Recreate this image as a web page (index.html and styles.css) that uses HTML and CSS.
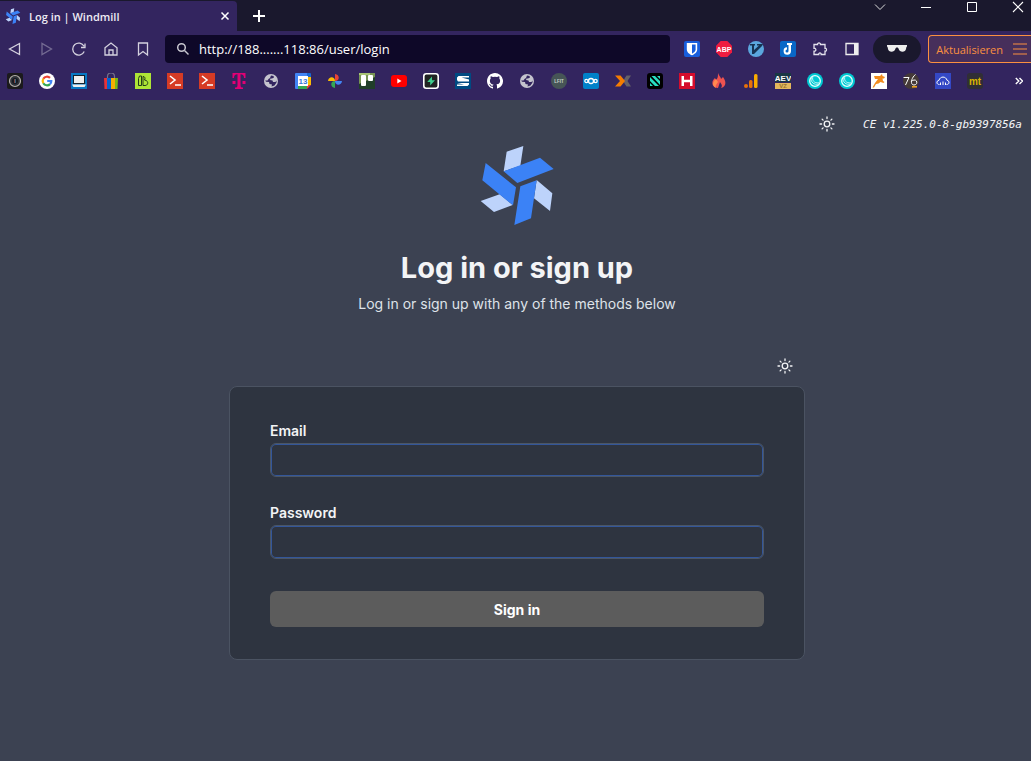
FILE: index.html
```html
<!DOCTYPE html>
<html lang="en">
<head>
<meta charset="utf-8">
<meta name="viewport" content="width=device-width, initial-scale=1">
<title>Log in | Windmill</title>
<link rel="stylesheet" href="styles.css">
</head>
<body>
<svg class="defs" aria-hidden="true">
  <symbol id="windmill" viewBox="60 30 220 240">
    <path fill="#bdd3fb" d="M139 50 189 33 180 92 130 109ZM229 135 276 175 269 228 221 190ZM61 198 118 178 157 210 101 231Z"/>
    <path fill="#3b82f6" d="M130 109 239 68 280 102 171 144ZM76 84 167 157 158 211 66 136ZM180 154 229 136 212 250 162 270Z"/>
  </symbol>
  <symbol id="sun" viewBox="0 0 16 16">
    <g fill="none" stroke="currentColor" stroke-width="1.3" stroke-linecap="round"><circle cx="8" cy="8" r="2.8"/><path d="M8 1v1.6M8 13.4V15M1 8h1.6M13.4 8H15M3.1 3.1l1 1M11.9 11.9l1 1M3.1 12.9l1-1M11.9 4.1l1-1"/></g>
  </symbol>
  <symbol id="globe" viewBox="0 0 16 16">
    <circle cx="8" cy="8" r="7" fill="#c5c4ce"/><path fill="#33255f" d="M8 2.600 10.500 3 11 4.500 9 5.500 7.500 5.500 7 7 9.500 7.500 10 9 12.500 9 13.500 7.500 13.500 9.500 11.500 12.500 8.500 13.600 9 11.500 6.500 11 6 9 3 8.800 2.200 7.500 4.500 7.500 5.500 6 7 5Z"/>
  </symbol>
  <symbol id="prompt" viewBox="0 0 16 16">
    <path fill="#d63b25" d="M0 0h16v16H0z"/><path d="m3 3 5 4-5 4M8 12h6" fill="none" stroke="#fff" stroke-width="1.6"/>
  </symbol>
  <symbol id="ring" viewBox="0 0 16 16">
    <circle cx="8" cy="8" r="8" fill="#00c9d2"/><g fill="none" stroke="#e5ffff"><circle cx="8" cy="8" r="5.3" stroke-width="1.3"/><path d="M6 3.5C4.5 7 7 10.5 12 9.8M4.2 5C3.5 9 7 12.3 11.5 11" stroke-width=".8"/></g>
  </symbol>
</svg>

<header class="browser">
  <div class="titlebar">
    <div class="tab">
      <svg class="icon"><use href="#windmill"/></svg>
      <span class="tab-title">Log in | Windmill</span>
      <button class="tab-close" aria-label="Close tab"><svg viewBox="0 0 10 10" width="10" height="10"><path d="m1.5 1.5 7 7m0-7-7 7" stroke="#fff" stroke-width="1.5"/></svg></button>
    </div>
    <button class="new-tab" aria-label="New tab"><svg viewBox="0 0 12 12" width="12" height="12"><path d="M6 0v12M0 6h12" stroke="#fff" stroke-width="2"/></svg></button>
    <div class="window-controls">
      <button aria-label="Tab list"><svg viewBox="0 0 12 12"><path d="m1 3.5 5 5 5-5" fill="none" stroke="#ddd"/></svg></button>
      <button aria-label="Minimize"><svg viewBox="0 0 12 12"><path d="M1 6.500h10" stroke="#fff"/></svg></button>
      <button aria-label="Maximize"><svg viewBox="0 0 12 12"><path d="M1.5 1.5h9v9h-9z" fill="none" stroke="#fff"/></svg></button>
      <button aria-label="Close window"><svg viewBox="0 0 12 12"><path d="m1 1 10 10M11 1 1 11" stroke="#fff" stroke-width="1.1"/></svg></button>
    </div>
  </div>

  <div class="toolbar">
    <nav class="nav-buttons" aria-label="Navigation">
      <button aria-label="Back"><svg viewBox="0 0 16 16"><path d="M12.500 2.500v11L2.500 8Z"/></svg></button>
      <button class="dim" aria-label="Forward"><svg viewBox="0 0 16 16"><path d="M3 2.5v11L12.500 8Z"/></svg></button>
      <button aria-label="Reload"><svg viewBox="0 0 16 16"><path d="M13.2 10.5A6 6 0 1 1 13 5.2M14 2.5v4h-4"/></svg></button>
      <button aria-label="Home"><svg viewBox="0 0 16 16"><path d="M2 6.8 8 2l6 4.8v7.2H2ZM6 14V9h4v5"/></svg></button>
      <button aria-label="Bookmark"><svg viewBox="0 0 16 16"><path d="M3.5 2h9v12L8 10.5 3.5 14Z"/></svg></button>
    </nav>
    <label class="address">
      <svg class="icon" viewBox="0 0 16 16"><g fill="none" stroke="#c8c7d0" stroke-width="1.5"><circle cx="6.5" cy="6.5" r="3.8"/><path d="m9.5 9.5 4 4"/></g></svg>
      <input class="address-input" type="text" aria-label="Address" value="http://188.......118:86/user/login">
    </label>
    <div class="extensions">
      <svg class="icon" viewBox="0 0 16 16"><rect width="16" height="16" rx="2" fill="#175ddc"/><path fill="#fff" d="M2.8 2h10.4v6.5c0 3-3.2 4.8-5.2 5.8-2-1-5.2-2.800-5.200-5.800Z"/><path fill="#175ddc" d="M8 3.500h3.600V8.500c0 1.800-1.800 3.200-3.600 4.200Z"/></svg>
      <svg class="icon" viewBox="0 0 16 16"><path fill="#ee1c40" d="M4.700 0h6.600L16 4.700v6.600L11.300 16H4.700L0 11.300V4.700Z"/><text x="8" y="10.700" class="glyph" font-size="7" fill="#fff">ABP</text></svg>
      <svg class="icon" viewBox="0 0 16 16"><circle cx="8" cy="8" r="8" fill="#5ba7de"/><path fill="#173454" d="M2 3h5v1.500H6V9l5-4.500H9V3h6l-1 2-8 8H4V4.500H2Z"/></svg>
      <svg class="icon" viewBox="0 0 16 16"><rect width="16" height="16" rx="2" fill="#0967c7"/><path fill="#fff" d="M7 2h5v2h-1v6a3.700 3.700 0 1 1-4-3.700v2.200a1.500 1.500 0 1 0 1.500 1.500V4H7Z"/></svg>
      <svg class="icon" viewBox="0 0 16 16"><path d="M2 3.500h3.500c-.5-2 3.500-2 3 0H13v3.800c2-.6 2 3.400 0 2.900v3.300H9.200c.5-2-3-2-2.500 0H2v-3.300c2.500.5 2.500-3.400 0-2.900Z" fill="none" stroke="#e3e1ec" stroke-width="1.300"/></svg>
      <svg class="icon" viewBox="0 0 16 16"><path d="M2 2.500h12v11H2Z" fill="none" stroke="#eee" stroke-width="1.300"/><path d="M10 2.500h4v11h-4Z" fill="#eee"/></svg>
    </div>
    <button class="private" aria-label="Private window"><svg viewBox="0 0 20 8" width="20" height="8"><path fill="#eee" d="M0 0h20v1.500c-.5 0-.7.800-.9 2C18.600 7.700 12.500 7.800 11.500 3.500 11.200 2 8.800 2 8.500 3.500 7.500 7.800 1.400 7.700.9 3.500.7 2.300.5 1.500 0 1.500Z"/></svg></button>
    <button class="update">Aktualisieren <svg viewBox="0 0 14 12" width="14" height="12"><path d="M0 1h14M0 6h14M0 11h14" stroke="#fb9040" stroke-width="1.200"/></svg></button>
  </div>

  <nav class="bookmarks" aria-label="Bookmarks">
    <svg class="icon" viewBox="0 0 16 16"><rect width="16" height="16" rx="2" fill="#1b1a1c"/><circle cx="8" cy="8" r="5.500" fill="#30343a" stroke="#b5b0ab" stroke-width="1.200"/><circle cx="8" cy="8" r="3" fill="#16191f"/><path d="M7.500 6v4" stroke="#7a443e"/><path d="M8.500 6v4" stroke="#37627f"/></svg>
    <svg class="icon" viewBox="0 0 16 16"><circle cx="8" cy="8" r="8" fill="#fff"/><g fill="none" stroke-width="2.200"><path stroke="#ea4335" d="M4.300 5.800A4.300 4.300 0 0 1 11 4.900"/><path stroke="#fbbc05" d="M4.300 5.800a4.300 4.300 0 0 0 0 4.400"/><path stroke="#34a853" d="M4.300 10.200A4.300 4.300 0 0 0 11 11.100"/><path stroke="#4285f4" d="M11 11.100A4.300 4.300 0 0 0 12.300 8H8.200"/></g></svg>
    <svg class="icon" viewBox="0 0 16 16"><path fill="#0878c4" d="M0 0h16v16H0z"/><path fill="#14222c" d="M2 2h12v9H2z"/><path fill="#eee" d="M3 3h10v7H3zM1 11.500h14L13.500 14h-11z"/></svg>
    <svg class="icon" viewBox="0 0 16 16"><path d="M4.500 6V3.500a3.500 3.500 0 0 1 7 0V6" fill="none" stroke="#75718a" stroke-width="1.200"/><path fill="#e53238" d="M1 5h4v11H1.500z"/><path fill="#0064d2" d="M4 5h4v11H4z"/><path fill="#f5af02" d="M8 5h4v11H8z"/><path fill="#78b817" d="M12 5h3l-.5 11H12z"/></svg>
    <svg class="icon" viewBox="0 0 16 16"><path fill="#aee536" d="M0 0h16v16H0z"/><g fill="none" stroke="#243c19"><path d="M6.500 12.500h-3V5.500l1-2.500h2Z"/><path d="M8 12.500V3.500c2 0 2.500 2 1.500 3.500C14 7.500 13.500 12.500 10 12.500Z"/></g></svg>
    <svg class="icon"><use href="#prompt"/></svg>
    <svg class="icon"><use href="#prompt"/></svg>
    <svg class="icon" viewBox="0 0 16 16"><path fill="#e20074" d="M1.500 0h13v5H13C13 2.500 12 1.500 9.500 1.300V12c0 2 .500 2.500 2.500 2.600V16H4v-1.400C6 14.500 6.500 14 6.500 12V1.300C4 1.500 3 2.500 3 5H1.500ZM1.500 8h3v3h-3zM11.500 8h3v3h-3z"/></svg>
    <svg class="icon"><use href="#globe"/></svg>
    <svg class="icon" viewBox="0 0 16 16"><path fill="#4285f4" d="M0 1a1 1 0 0 1 1-1h11v4H4v12H1a1 1 0 0 1-1-1Z"/><path fill="#1967d2" d="M12 0h3a1 1 0 0 1 1 1v3h-4z"/><path fill="#fbbc04" d="M12 4h4v8h-4z"/><path fill="#34a853" d="M3 12h9v4H3z"/><path fill="#ea4335" d="M12 12h4l-4 4z"/><path fill="#fff" d="M3 3h10v10H3z"/><text x="8" y="11" class="glyph" font-size="8" fill="#3475d9">13</text></svg>
    <svg class="icon" viewBox="0 0 16 16"><path fill="#ea4335" d="M8 1c5 .5 5 7 0 7Z"/><path fill="#4285f4" d="M15 8c-.5 5-7 5-7 0Z"/><path fill="#34a853" d="M8 15c-5-.5-5-7 0-7Z"/><path fill="#fbbc04" d="M1 8c.5-5 7-5 7 0Z"/></svg>
    <svg class="icon" viewBox="0 0 16 16"><path fill="#203e2a" d="M0 0h16v16H0z"/><path fill="#789455" d="M0 0h16v4L0 11z"/><path fill="#a8c475" d="M0 0h11v2H0z"/><rect x="2" y="2" width="5" height="11" rx="1" fill="#fff"/><rect x="9" y="2" width="5" height="6" rx="1" fill="#fff"/></svg>
    <svg class="icon" viewBox="0 0 16 16"><rect y="2" width="16" height="12" rx="3" fill="#f00"/><path fill="#fff" d="m6.300 5.500 4.200 2.500-4.200 2.500Z"/></svg>
    <svg class="icon" viewBox="0 0 16 16"><rect x=".8" y=".8" width="14.400" height="14.400" rx="2.500" fill="#202322" stroke="#fff" stroke-width="1.600"/><path fill="#3ecf8e" d="M9 3.500v3.700h3L7.200 12.500V9h-3Z"/></svg>
    <svg class="icon" viewBox="0 0 16 16"><path fill="#004a82" d="M0 0h16v16H0z"/><path fill="#fff" d="M3.500 3H14v1.500H6.500L14 6.500v2H3L2 7V4.500ZM2 10h12v1.500L12.500 13H2v-1.500h7Z"/></svg>
    <svg class="icon" viewBox="0 0 16 16"><path fill="#fff" d="M8 0C3.600 0 0 3.600 0 8c0 3.500 2.300 6.500 5.500 7.600.4.100.5-.2.500-.4v-1.500c-2.200.5-2.700-.9-2.700-.9-.400-.9-.9-1.200-.9-1.200-.7-.5.1-.5.100-.5.8.1 1.200.8 1.200.8.7 1.200 1.900.9 2.300.7.100-.5.300-.9.500-1.100-1.800-.2-3.600-.9-3.600-4 0-.9.300-1.600.8-2.100-.1-.2-.4-1 .1-2.100 0 0 .7-.2 2.200.8a7.600 7.600 0 0 1 4 0c1.500-1 2.200-.8 2.200-.8.400 1.100.2 1.900.1 2.100.5.600.8 1.300.8 2.100 0 3.100-1.900 3.700-3.700 3.900.3.300.6.800.6 1.500v2.300c0 .2.100.5.500.4A8 8 0 0 0 8 0Z"/></svg>
    <svg class="icon"><use href="#globe"/></svg>
    <svg class="icon" viewBox="0 0 16 16"><circle cx="8" cy="8" r="8" fill="#465556"/><text x="8" y="9.500" class="glyph" font-size="4.500" fill="#c9d2cb">LFIT</text></svg>
    <svg class="icon" viewBox="0 0 16 16"><rect width="16" height="16" rx="2" fill="#0082c9"/><g fill="none" stroke="#fff" stroke-width="1.300"><circle cx="8" cy="8" r="2.500"/><circle cx="3.400" cy="8" r="1.600"/><circle cx="12.600" cy="8" r="1.600"/></g></svg>
    <svg class="icon" viewBox="0 0 16 16"><path fill="#666067" d="M11.500 2.500H16L12.500 8l3.500 5.500h-4.500L8 8Z"/><path fill="#f57c00" d="M0 2.500h5.500L10 8l-4.500 5.500H0L5 8Z"/></svg>
    <svg class="icon" viewBox="0 0 16 16"><rect width="16" height="16" rx="3" fill="#000"/><path fill="#27dfc2" d="M3 4 12 13H8L3 8ZM4.500 3H8l5 5v4ZM3 10l3 3H3ZM10 3h3v3Z"/></svg>
    <svg class="icon" viewBox="0 0 16 16"><path fill="#d50c2d" d="M0 0h16v16H0z"/><path fill="#fff" d="M2.500 3H5v3.800h6V3h2.500v10H11V9.200H5V13H2.500z"/></svg>
    <svg class="icon" viewBox="0 0 16 16"><path fill="#ef5350" d="M7 0c1 3 3 4 3 6l2-2c3 4 4 9-2 11 2-3 0-4-1-6l-2 6C-1 14 1 7 4 5l1 2c2-2 2-4 2-7Z"/><path fill="#ff8a50" d="M5 6c-4 3-4 7 0 9-1-3 1-4 2-6Z"/></svg>
    <svg class="icon" viewBox="0 0 16 16"><circle cx="3" cy="13" r="2" fill="#e8710a"/><rect x="6" y="7" width="3.500" height="8" rx="1.500" fill="#e8710a"/><rect x="11" y="1" width="3.500" height="14" rx="1.500" fill="#f9ab00"/></svg>
    <svg class="icon" viewBox="0 0 16 16"><path fill="#193844" d="M0 0h16v9H0z"/><path fill="#e4b75c" d="M0 10h16v6H0z"/><text x="8" y="7.500" class="glyph" font-size="8" fill="#fff">AEV</text><text x="8" y="15.200" class="glyph" font-size="6" fill="#9a7431">VZ</text></svg>
    <svg class="icon"><use href="#ring"/></svg>
    <svg class="icon"><use href="#ring"/></svg>
    <svg class="icon" viewBox="0 0 16 16"><path fill="#fff" d="M0 0h16v16H0z"/><path fill="#f28b1d" d="M3 3h6l2-2 .5 2L14 4l-1 1.500h-1.500L12 8l1.500 1-1 1-3-1-2 1.500L5 11l-2 3.500H1.500L4 10l3-4H4Z"/></svg>
    <svg class="icon" viewBox="0 0 16 16"><circle cx="8" cy="8" r="8" fill="#453a38"/><path d="M.5 4.500H6L2.500 12M12.500 1.500C8 5 7 12 11 12c4 0 3.500-5.500 0-5C9 7.300 8 9 8 9" fill="none" stroke="#fff"/><path d="M9 13.800h5" stroke="#f6aa21" stroke-width="1.500"/></svg>
    <svg class="icon" viewBox="0 0 16 16"><path fill="#3448c5" d="M0 0h16v16H0z"/><path d="M4.500 11.500C.8 11.500 1.500 7.500 4 7.300 5 3 11 3 12 7.300c2.500.2 3 4.200-.5 4.200" fill="none" stroke="#fff"/><path d="M5.500 9.500V12M8 8.500V12M10.500 9.500V12" stroke="#fff"/></svg>
    <svg class="icon" viewBox="0 0 16 16"><rect width="16" height="16" rx="3" fill="#302e35"/><text x="8" y="11.500" class="glyph" font-size="10" fill="#d9b400">mt</text></svg>
    <button class="more" aria-label="More bookmarks"><svg viewBox="0 0 8 8" width="8" height="8"><path d="m.8 1 3 3-3 3M4.500 1l3 3-3 3" fill="none" stroke="#fff" stroke-width="1.400"/></svg></button>
  </nav>
</header>

<main class="page">
  <div class="version-row">
    <button class="theme" aria-label="Toggle theme"><svg class="icon"><use href="#sun"/></svg></button>
    <span class="version">CE v1.225.0-8-gb9397856a</span>
  </div>
  <section class="login">
    <svg class="logo" role="img" aria-label="Windmill"><use href="#windmill"/></svg>
    <h1 class="heading">Log in or sign up</h1>
    <p class="subtitle">Log in or sign up with any of the methods below</p>
    <button class="theme theme-login" aria-label="Toggle theme"><svg class="icon"><use href="#sun"/></svg></button>
    <form class="card">
      <div class="field"><label for="email">Email</label><input id="email" type="email"></div>
      <div class="field"><label for="password">Password</label><input id="password" type="password"></div>
      <button class="submit" type="button">Sign in</button>
    </form>
  </section>
</main>
</body>
</html>
```
FILE: styles.css
```css
* { box-sizing: border-box; }
body {
  margin: 0;
  min-height: 100vh;
  display: flex;
  flex-direction: column;
  background: #3c4252;
  color: #f3f4f6;
  font-family: Inter, "Liberation Sans", sans-serif;
}
button { border: 0; padding: 0; background: none; color: inherit; font: inherit; cursor: pointer; }
svg { display: block; }
.defs { position: absolute; width: 0; height: 0; }
.icon { width: 16px; height: 16px; flex: none; }
.glyph { font-family: "Liberation Sans", sans-serif; font-weight: 700; text-anchor: middle; }

.browser { background: #33255f; font-family: "Open Sans", "Noto Sans", sans-serif; }
.titlebar { display: flex; height: 31px; background: #1a182d; }
.tab {
  display: flex;
  align-items: center;
  width: 237px;
  margin-top: 1px;
  padding: 0 7px 0 5px;
  gap: 8px;
  background: #33255f;
  border-radius: 0 4px 0 0;
  font-size: 11px;
}
.tab-title { flex: 1; font-weight: 600; color: #eeecf4; }
.new-tab { padding: 0 16px; }
.window-controls { display: flex; gap: 34px; margin-left: auto; padding: 1px 7px 0 0; align-items: flex-start; }
.window-controls svg { width: 12px; height: 12px; }

.toolbar { display: flex; align-items: center; height: 36px; padding-left: 7px; }
.nav-buttons { display: flex; gap: 16px; }
.nav-buttons svg { width: 16px; height: 16px; fill: none; stroke: #d5d2df; stroke-width: 1.3; }
.nav-buttons .dim { opacity: .4; }
.address {
  display: flex;
  flex: 1;
  align-items: center;
  gap: 8px;
  height: 28px;
  margin: 0 14px;
  padding: 0 10px;
  background: #0e0828;
  border-radius: 4px;
}
.address-input {
  flex: 1;
  min-width: 0;
  padding: 0;
  border: 0;
  outline: 0;
  background: none;
  color: #fff;
  font: 13px "Open Sans", "Noto Sans", sans-serif;
}
.extensions { display: flex; gap: 16px; }
.private {
  display: grid;
  place-items: center;
  width: 48px;
  height: 28px;
  margin: 0 7px 0 13px;
  background: #1a182d;
  border-radius: 14px;
}
.update {
  display: flex;
  align-items: center;
  gap: 10px;
  height: 28px;
  padding: 0 4px 0 7px;
  border: 1px solid #fb9040;
  border-right: 0;
  border-radius: 4px 0 0 4px;
  background: #472f5b;
  color: #fb9040;
  font-size: 11px;
}
.bookmarks { display: flex; align-items: center; gap: 16px; height: 33px; padding: 0 8px 5px 7px; }
.more { margin-left: auto; }

.page { flex: 1; padding: 12px 0 32px 3px; }
.version-row { display: flex; justify-content: flex-end; align-items: center; gap: 28px; height: 24px; padding-right: 9px; }
.version { font: italic 11px "DejaVu Sans Mono", monospace; }
.theme { color: #f3f4f6; }
.login { display: flex; flex-direction: column; align-items: center; max-width: 576px; margin: 0 auto; padding-top: 9px; }
.logo { width: 74px; height: 80px; }
.heading { margin: 25px 0 0; font-size: 29px; line-height: 36px; font-weight: 700; }
.subtitle { margin: 6px 0 0; font-size: 14px; line-height: 24px; color: #dfe3e9; }
.theme-login { align-self: flex-end; margin: 42px 12px 12px; }
.card {
  width: 100%;
  padding: 32px 40px;
  background: #2e3440;
  border: 1px solid #4b5362;
  border-radius: 8px;
}
.field { margin-bottom: 24px; }
.field label { display: block; font-size: 14px; line-height: 24px; font-weight: 600; }
.field input {
  display: block;
  width: 100%;
  height: 34px;
  padding: 0 8px;
  border: 1px solid #4b5665;
  border-radius: 6px;
  outline: 0;
  background: transparent;
  box-shadow: inset 0 0 0 1px #33569a;
  color: inherit;
}
.submit {
  display: block;
  width: 100%;
  height: 36px;
  margin-top: 32px;
  background: #5c5c5c;
  border-radius: 6px;
  color: #fff;
  font-size: 14px;
  font-weight: 700;
}
```
